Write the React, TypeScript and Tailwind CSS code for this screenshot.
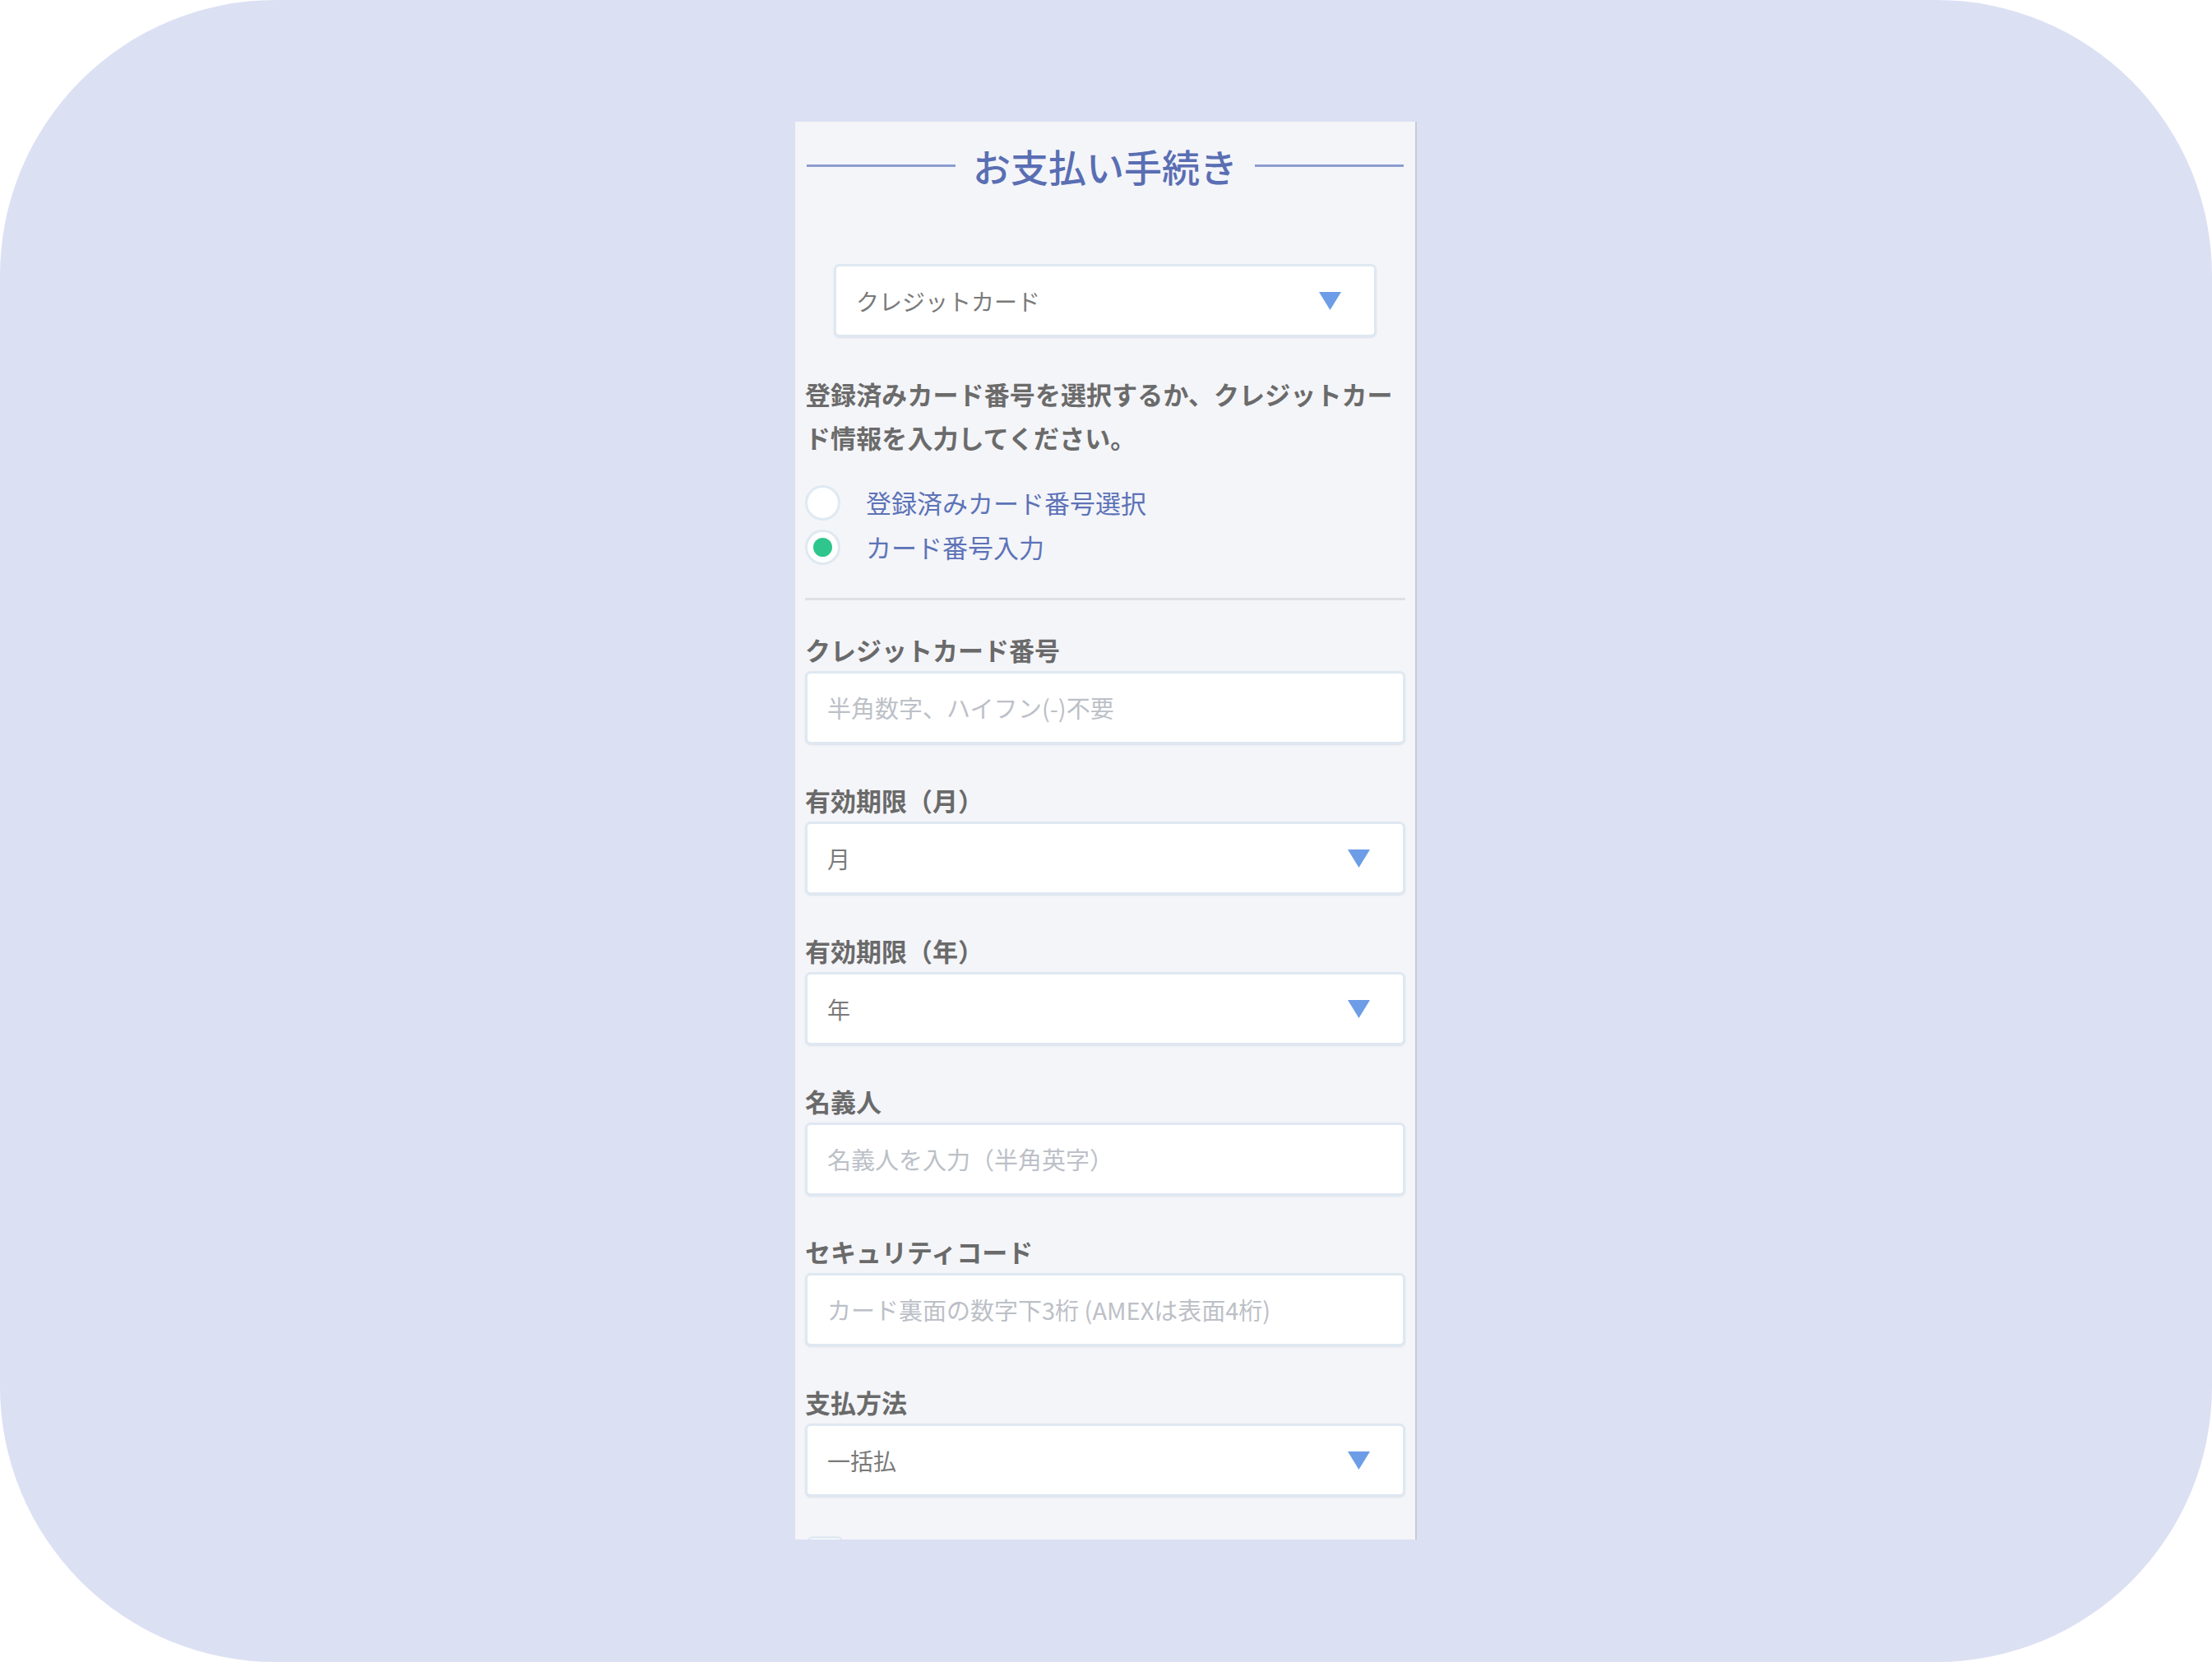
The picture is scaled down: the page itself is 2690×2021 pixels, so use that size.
const jp = "[font-family:'Noto_Sans_CJK_JP','Noto_Sans',sans-serif]";

function Arrow() {
  return (
    <svg width="27" height="22" viewBox="0 0 27 22" className="shrink-0">
      <polygon points="0,0 27,0 13.5,22" fill="#6c9de6" />
    </svg>
  );
}

function Field({ label, children }: { label: string; children: React.ReactNode }) {
  return (
    <div className="flex flex-col">
      <div className="text-[31px] leading-[40px] font-bold text-[#6a6a6a]">{label}</div>
      <div className="mt-[6px]">{children}</div>
    </div>
  );
}

function Box({ text, placeholder, select }: { text: string; placeholder?: boolean; select?: boolean }) {
  return (
    <div className="h-[89px] rounded-[7px] border-[3px] border-[#dfe8f1] bg-white shadow-[0_1px_2px_rgba(170,190,210,0.35)] flex items-center justify-between pl-[24px] pr-[40px]">
      <span className={placeholder ? "text-[29px] text-[#bcc0c7]" : "text-[28px] text-[#7a7a7a]"}>{text}</span>
      {select && <Arrow />}
    </div>
  );
}

export default function App() {
  return (
    <div className={`w-[2690px] h-[2021px] bg-white ${jp}`}>
      <div className="w-full h-full rounded-[335px] bg-[#dce0f3] flex justify-center items-start pt-[148px]">
        <div className="w-[756px] h-[1724px] bg-[#f4f5f9] border-r-2 border-[#c9cbd0] overflow-hidden">
          <div className="flex items-center gap-[21px] px-[14px] mt-[23px]">
            <div className="flex-1 h-[3px] bg-[#8b9ccf]" />
            <h1 className="text-[46px] leading-[60px] font-medium text-[#5a6eb3]">お支払い手続き</h1>
            <div className="flex-1 h-[3px] bg-[#8b9ccf]" />
          </div>

          <div className="mx-[47px] mt-[90px] h-[89px] rounded-[7px] border-[3px] border-[#dfe8f1] bg-white shadow-[0_1px_2px_rgba(170,190,210,0.35)] flex items-center justify-between pl-[24px] pr-[40px]">
            <span className="text-[28px] text-[#7a7a7a]">クレジットカード</span>
            <Arrow />
          </div>

          <div className="px-[12px]">
            <p className="mt-[42px] text-[31px] leading-[53px] font-bold text-[#6b6b6b] tracking-[0.1px]">
              登録済みカード番号を選択するか、クレジットカード情報を入力してください。
            </p>

            <div className="mt-[26px] flex flex-col">
              <label className="h-[54px] flex items-center gap-[31px]">
                <span className="w-[43px] h-[43px] rounded-full bg-white border-[3px] border-[#dfe9f1]" />
                <span className="text-[31px] text-[#5d73b8]">登録済みカード番号選択</span>
              </label>
              <label className="h-[54px] flex items-center gap-[31px]">
                <span className="w-[43px] h-[43px] rounded-full bg-white border-[3px] border-[#dfe9f1] flex items-center justify-center">
                  <span className="w-[23px] h-[23px] rounded-full bg-[#2ec68c]" />
                </span>
                <span className="text-[31px] text-[#5d73b8]">カード番号入力</span>
              </label>
            </div>

            <div className="mt-[35px] h-[3px] bg-[#dfe0e4]" />

            <div className="mt-[40px] flex flex-col gap-[48px]">
              <Field label="クレジットカード番号">
                <Box text="半角数字、ハイフン(-)不要" placeholder />
              </Field>
              <Field label="有効期限（月）">
                <Box text="月" select />
              </Field>
              <Field label="有効期限（年）">
                <Box text="年" select />
              </Field>
              <Field label="名義人">
                <Box text="名義人を入力（半角英字）" placeholder />
              </Field>
              <Field label="セキュリティコード">
                <Box text="カード裏面の数字下3桁 (AMEXは表面4桁)" placeholder />
              </Field>
              <Field label="支払方法">
                <Box text="一括払" select />
              </Field>
              <div className="ml-[3px] w-[43px] h-[43px] rounded-[6px] border-[3px] border-[#e2eaf2] bg-white" />
            </div>
          </div>
        </div>
      </div>
    </div>
  );
}
